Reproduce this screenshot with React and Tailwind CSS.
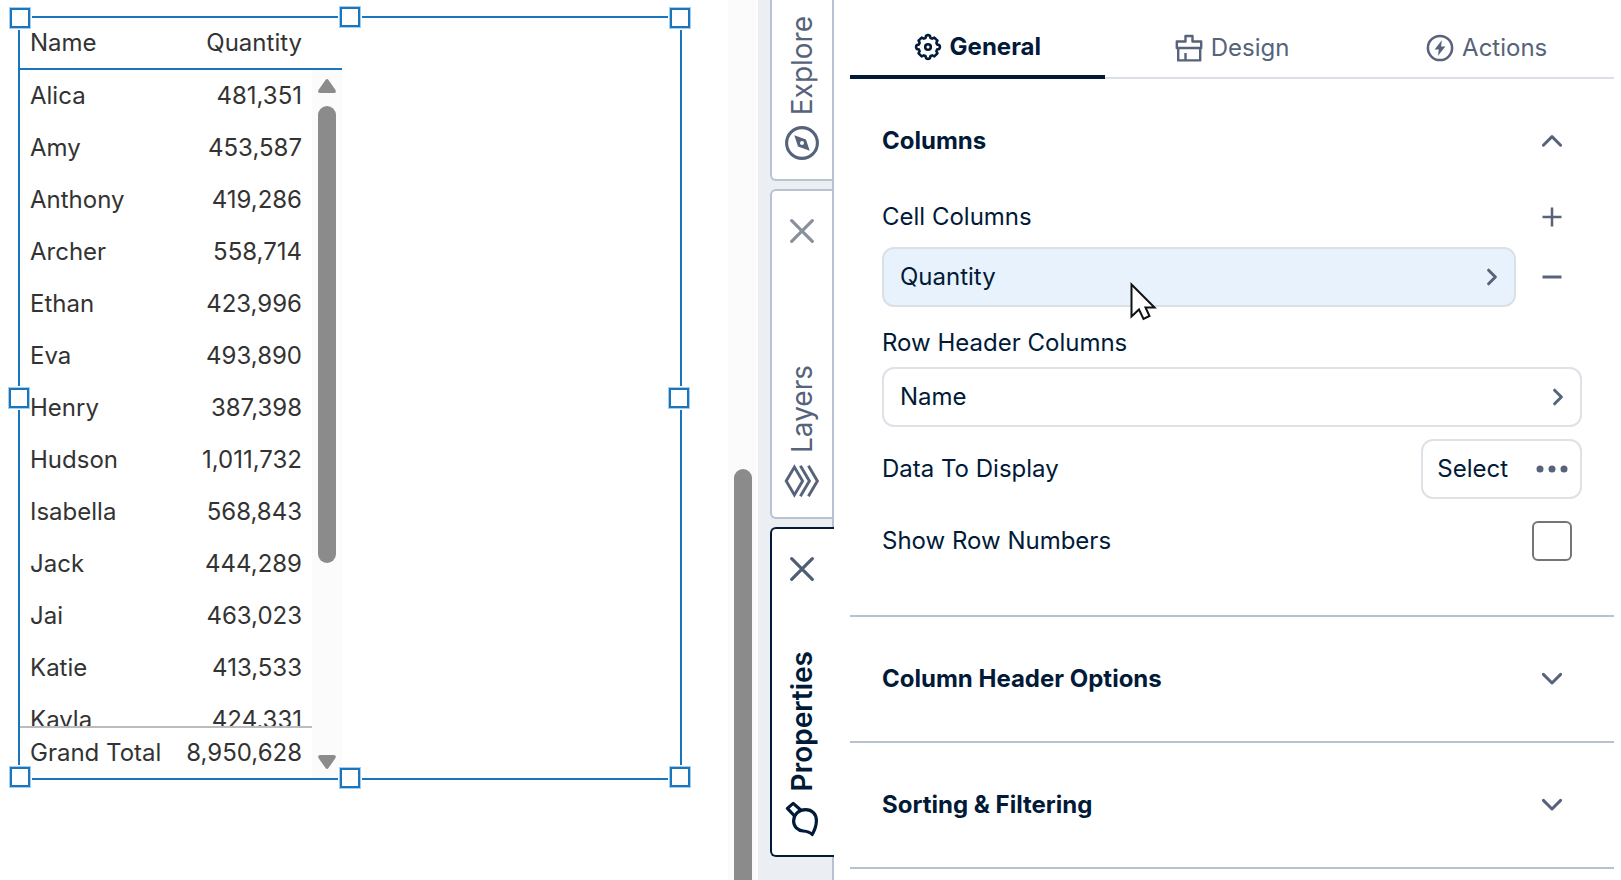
import { useState } from "react";

const ROWS = [
  ["Alica", "481,351"],
  ["Amy", "453,587"],
  ["Anthony", "419,286"],
  ["Archer", "558,714"],
  ["Ethan", "423,996"],
  ["Eva", "493,890"],
  ["Henry", "387,398"],
  ["Hudson", "1,011,732"],
  ["Isabella", "568,843"],
  ["Jack", "444,289"],
  ["Jai", "463,023"],
  ["Katie", "413,533"],
  ["Kayla", "424,331"],
];

const HANDLES = [
  "left-0 top-0",
  "left-1/2 -top-px -translate-x-1/2",
  "right-0 top-0",
  "-left-px top-1/2 -translate-y-1/2",
  "right-px top-1/2 -translate-y-1/2",
  "left-0 bottom-px",
  "left-1/2 bottom-0 -translate-x-1/2",
  "right-0 bottom-px",
];

function GearIcon() {
  return (
    <svg className="size-7" viewBox="0 0 28 28" fill="none" stroke="currentColor" strokeWidth="2.6" strokeLinejoin="round" aria-hidden="true">
      <path d="M12.1 2.8Q14 1.4 15.9 2.8L16.6 5L18.2 5.6L20.3 4.6L23.4 7.7L22.4 9.8L23 11.4L25.2 12.1Q26.6 14 25.2 15.9L23 16.6L22.4 18.2L23.4 20.3L20.3 23.4L18.2 22.4L16.6 23L15.9 25.2Q14 26.6 12.1 25.2L11.4 23L9.8 22.4L7.7 23.4L4.6 20.3L5.6 18.2L5 16.6L2.8 15.9Q1.4 14 2.8 12.1L5 11.4L5.6 9.8L4.6 7.7L7.7 4.6L9.8 5.6L11.4 5Z" />
      <circle cx="14" cy="14" r="2.8" />
    </svg>
  );
}

function BrushIcon() {
  return (
    <svg className="size-7" viewBox="0 0 28 28" fill="none" stroke="currentColor" strokeWidth="2.4" strokeLinejoin="round" aria-hidden="true">
      <path d="M1.8 14V7.5H10.5V2H17.5V7.5H26.2V14Z" />
      <path d="M3.2 14V26.4H25.2V14M10.5 26V19" />
    </svg>
  );
}

function BoltIcon() {
  return (
    <svg className="size-7" viewBox="0 0 28 28" aria-hidden="true">
      <circle cx="14" cy="14" r="12.1" fill="none" stroke="currentColor" strokeWidth="2.5" />
      <path d="M15.8 6.2L8.6 15.4H12.8L12 21.8L19.4 12.4H15.1Z" fill="currentColor" />
    </svg>
  );
}

function CompassIcon() {
  return (
    <svg className="size-9" viewBox="0 0 36 36" aria-hidden="true">
      <circle cx="18" cy="18" r="15.4" fill="none" stroke="currentColor" strokeWidth="3.1" />
      <path fill="currentColor" fillRule="evenodd" d="M10.3 10.3L22 14.6L25.7 25.7L14 21.4ZM18 16A2 2 0 1 0 18 20A2 2 0 1 0 18 16Z" />
    </svg>
  );
}

function LayersIcon() {
  return (
    <svg className="size-9" viewBox="0 0 36 36" fill="none" stroke="currentColor" strokeWidth="2.9" aria-hidden="true">
      <path d="M2.2 18L10.4 4L18.6 18L10.4 32Z" />
      <path d="M16.4 2.8L25.4 18L16.4 33.2M24.4 2.8L33.4 18L24.4 33.2" />
    </svg>
  );
}

function PaintIcon() {
  return (
    <svg className="size-9" viewBox="0 0 36 36" fill="none" stroke="currentColor" strokeWidth="3.2" strokeLinejoin="round" aria-hidden="true">
      <path d="M28.2 33.5C30.5 29.5 32.4 25 32.4 19.5C32.4 13 28 8.6 21.6 8.6C14.8 8.6 9.6 13.5 9.6 20C9.6 25.5 13.6 29.6 19.2 30C23.2 30.3 25.8 31 28.2 33.5Z" />
      <path d="M11 15.5L3.4 7.4L9.2 2.4L17 9.2" />
    </svg>
  );
}

function CloseIcon() {
  return (
    <svg className="size-6" viewBox="0 0 24 24" fill="none" stroke="currentColor" strokeWidth="3.2" strokeLinecap="round" aria-hidden="true">
      <path d="M1.7 1.7L22.3 22.3M22.3 1.7L1.7 22.3" />
    </svg>
  );
}

function Chevron({ d }) {
  return (
    <svg className="size-6" viewBox="0 0 24 24" fill="none" stroke="currentColor" strokeWidth="3" strokeLinecap="round" strokeLinejoin="round" aria-hidden="true">
      <path d={d} />
    </svg>
  );
}

const RIGHT = "M8.6 5.2L15.4 12L8.6 18.8";
const UP = "M3.4 16.2L12 7.6L20.6 16.2";
const DOWN = "M3.4 7.4L12 16L20.6 7.4";

function TableWidget() {
  return (
    <section aria-label="Quantity by name" className="relative mt-4 mr-[46px] ml-[18px] border-2 border-[#1976bd] bg-white">
      <div className="flex">
        <table className="block w-[292px] text-[#333333]">
          <thead className="block border-b-2 border-[#1976bd]">
            <tr className="flex h-[50px] items-center justify-between px-[10px]">
              <th scope="col" className="font-normal">Name</th>
              <th scope="col" className="font-normal">Quantity</th>
            </tr>
          </thead>
          <tbody className="block h-[656px] overflow-hidden">
            {ROWS.map(([name, quantity]) => (
              <tr key={name} className="flex h-[52px] items-center justify-between px-[10px]">
                <td>{name}</td>
                <td>{quantity}</td>
              </tr>
            ))}
          </tbody>
          <tfoot className="block border-t-2 border-[#bcbcbc]">
            <tr className="flex h-[50px] items-center justify-between px-[10px]">
              <td>Grand Total</td>
              <td>8,950,628</td>
            </tr>
          </tfoot>
        </table>
        <div className="flex w-[30px] flex-col" aria-hidden="true">
          <div className="h-[52px] border-b-2 border-[#1976bd]" />
          <div className="flex grow flex-col items-center bg-[#fbfbfb] py-[9px]">
            <svg className="h-[14px] w-[18px] fill-[#8b8b8b]" viewBox="0 0 18 14">
              <path d="M7.5 1Q9 -1 10.5 1L17.5 11Q18.5 14 16 14H2Q-.5 14 .5 11Z" />
            </svg>
            <div className="mt-[13px] h-[457px] w-[18px] rounded-full bg-[#8b8b8b]" />
            <svg className="mt-auto h-[14px] w-[18px] fill-[#8b8b8b]" viewBox="0 0 18 14">
              <path d="M7.5 13Q9 15 10.5 13L17.5 3Q18.5 0 16 0H2Q-.5 0 .5 3Z" />
            </svg>
          </div>
        </div>
      </div>
      <div className="absolute -inset-[10px]" aria-hidden="true">
        {HANDLES.map((place) => (
          <span key={place} className={`absolute size-5 border-2 border-[#1976bd] bg-white shadow-[0_0_0_1px_#a8cdec,0_0_0_2px_#ffffff] ${place}`} />
        ))}
      </div>
    </section>
  );
}

function RailTab({ label, icon, closable, active, className }) {
  const tone = active
    ? "border-[#011a38] text-[#011a38] font-semibold pr-0.5"
    : "border-[#b8c2d1] text-[#56637a] border-r-0 mr-0.5";
  return (
    <div className={`flex flex-col items-center bg-white pb-[18px] text-[28px] leading-8 ${tone} ${className}`}>
      {closable && (
        <button type="button" aria-label={`Close ${label}`} className={active ? "text-[#4f5d75]" : "text-[#8a8f9c]"}>
          <CloseIcon />
        </button>
      )}
      <button type="button" className="mt-auto flex flex-col items-center gap-[10px]">
        <span className="rotate-180 [writing-mode:vertical-rl]">{label}</span>
        {icon}
      </button>
    </div>
  );
}

function PanelTab({ label, icon, active, onClick }) {
  return (
    <button
      type="button"
      role="tab"
      aria-selected={active}
      onClick={onClick}
      className={`flex h-[79px] flex-1 items-start justify-center gap-2 ${
        active
          ? "border-b-4 border-[#011a38] pt-[33px] font-bold text-[#011a38]"
          : "border-b-2 border-[#dcdfe5] pt-[34px] text-[#56637a]"
      }`}
    >
      {icon}
      <span className="leading-7">{label}</span>
    </button>
  );
}

function Section({ title, children, open }) {
  return (
    <section className="border-b-2 border-[#b8c2ce]">
      <h2>
        <button type="button" aria-expanded={!!open} className="flex h-[124px] w-full items-center justify-between pr-[50px] pl-8 font-bold">
          {title}
          <span className="text-[#56637a]">
            <Chevron d={open ? UP : DOWN} />
          </span>
        </button>
      </h2>
      {children}
    </section>
  );
}

export default function App() {
  const [tab, setTab] = useState("General");
  const [numbers, setNumbers] = useState(false);
  return (
    <div className="flex min-h-screen bg-white font-['Inter',sans-serif] text-2xl leading-7 text-[#011a38]">
      <main className="min-w-0 flex-[728]">
        <TableWidget />
      </main>

      <div className="flex w-[30px] shrink-0 flex-col items-center border-r border-white bg-[#fbfbfb] pt-[469px]" aria-hidden="true">
        <div className="w-[18px] grow rounded-t-full bg-[#8b8b8b]" />
      </div>

      <nav aria-label="Panels" className="relative flex w-[76px] shrink-0 flex-col gap-2 pl-3">
        <div className="absolute inset-0 border-r-2 border-[#b8c2d1] bg-[#ebeff3]" />
        <RailTab label="Explore" icon={<CompassIcon />} className="relative h-[181px] rounded-bl-md border-b-2 border-l-2" />
        <RailTab label="Layers" icon={<LayersIcon />} closable className="relative h-[330px] rounded-l-md border-2 pt-7" />
        <RailTab label="Properties" icon={<PaintIcon />} closable active className="relative h-[330px] rounded-l-md border-y-2 border-l-2 pt-7" />
      </nav>

      <aside className="min-w-0 flex-[787]">
        <div className="pr-[7px] pl-4">
          <div role="tablist" className="flex">
            <PanelTab label="General" icon={<GearIcon />} active={tab === "General"} onClick={() => setTab("General")} />
            <PanelTab label="Design" icon={<BrushIcon />} active={tab === "Design"} onClick={() => setTab("Design")} />
            <PanelTab label="Actions" icon={<BoltIcon />} active={tab === "Actions"} onClick={() => setTab("Actions")} />
          </div>

          <Section title="Columns" open>
            <div className="flex flex-col pr-8 pb-[54px] pl-8">
              <div className="flex h-11 items-start justify-between pr-[18px]">
                <span>Cell Columns</span>
                <button type="button" aria-label="Add cell column" className="pt-0.5 text-[#56637a]">
                  <svg className="size-6" viewBox="0 0 24 24" fill="none" stroke="currentColor" strokeWidth="2.5" aria-hidden="true">
                    <path d="M2.5 12H21.5M12 2.5V21.5" />
                  </svg>
                </button>
              </div>
              <div className="relative flex items-center gap-6 pr-[18px]">
                <button type="button" className="flex h-[60px] grow items-center justify-between rounded-xl border-2 border-[#dbe0e6] bg-[#e8f2fc] pr-[10px] pl-4">
                  Quantity
                  <span className="text-[#56637a]"><Chevron d={RIGHT} /></span>
                </button>
                <button type="button" aria-label="Remove Quantity" className="text-[#56637a]">
                  <svg className="size-6" viewBox="0 0 24 24" fill="none" stroke="currentColor" strokeWidth="3" aria-hidden="true">
                    <path d="M2.5 12H21.5" />
                  </svg>
                </button>
                <svg className="absolute top-[34px] left-[247px] h-10 w-7" viewBox="0 0 28 40" fill="#ffffff" stroke="#111111" strokeWidth="2" aria-hidden="true">
                  <path d="M2.5 3.5V35.5L10 28.5L14.5 38L20.5 35L16.5 26.5H25.5Z" />
                </svg>
              </div>
              <span className="mt-[22px] mb-[10px]">Row Header Columns</span>
              <button type="button" className="flex h-[60px] items-center justify-between rounded-xl border-2 border-[#dfe1e6] pr-[10px] pl-4">
                Name
                <span className="text-[#56637a]"><Chevron d={RIGHT} /></span>
              </button>
              <div className="mt-3 flex items-center justify-between">
                <span>Data To Display</span>
                <button type="button" className="flex h-[60px] items-center gap-7 rounded-xl border-2 border-[#dfe1e6] pr-3 pl-[14px]">
                  Select
                  <svg className="h-2 w-8 fill-[#56637a]" viewBox="0 0 32 8" aria-hidden="true">
                    <circle cx="4" cy="4" r="3.5" />
                    <circle cx="16" cy="4" r="3.5" />
                    <circle cx="28" cy="4" r="3.5" />
                  </svg>
                </button>
              </div>
              <div className="mt-[22px] flex items-center justify-between pr-[10px]">
                <label htmlFor="row-numbers">Show Row Numbers</label>
                <input
                  id="row-numbers"
                  type="checkbox"
                  checked={numbers}
                  onChange={(e) => setNumbers(e.target.checked)}
                  className="size-10 appearance-none rounded-md border-2 border-[#757575] bg-white checked:bg-[#011a38]"
                />
              </div>
            </div>
          </Section>
          <Section title="Column Header Options" />
          <Section title="Sorting &amp; Filtering" />
        </div>
      </aside>
    </div>
  );
}
